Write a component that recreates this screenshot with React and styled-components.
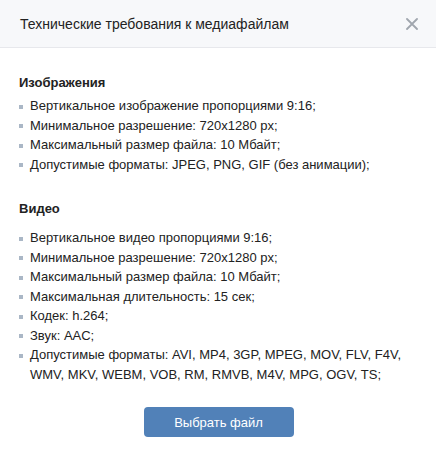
import styled, { createGlobalStyle } from 'styled-components'

const GlobalStyle = createGlobalStyle`
  html, body {
    margin: 0;
    padding: 0;
    background: #ffffff;
  }
  body {
    font-family: "Liberation Sans", Arial, sans-serif;
    color: #222222;
  }
`

const Modal = styled.div`
  width: 436px;
  min-height: 453px;
  background: #ffffff;
  display: flex;
  flex-direction: column;
`

const Header = styled.div`
  height: 48px;
  box-sizing: border-box;
  display: flex;
  align-items: center;
  justify-content: space-between;
  padding: 0 12px 0 20px;
  background: #f7f8fa;
  border-bottom: 1px solid #e7e8ec;
`

const Title = styled.div`
  font-size: 14px;
  color: #222222;
`

const CloseButton = styled.button`
  width: 24px;
  height: 24px;
  padding: 0;
  border: 0;
  background: transparent;
  display: flex;
  align-items: center;
  justify-content: center;
  cursor: pointer;
  color: #a0a6ae;
`

const Body = styled.div`
  padding: 26px 18px 15px 19px;
  display: flex;
  flex-direction: column;
`

const Section = styled.section`
  & + & {
    margin-top: 26px;
  }
`

const SectionTitle = styled.div`
  font-size: 13px;
  font-weight: 700;
  line-height: 18px;
  margin-bottom: ${({ $gap }) => $gap}px;
`

const List = styled.ul`
  list-style: none;
  margin: 0;
  padding: 0;
`

const Item = styled.li`
  position: relative;
  padding-left: 11px;
  font-size: 13px;
  line-height: 19.5px;
  color: #222222;

  &::before {
    content: '';
    position: absolute;
    left: 0;
    top: 8.5px;
    width: 4px;
    height: 4px;
    background: #aab7c6;
  }
`

const Footer = styled.div`
  display: flex;
  justify-content: center;
  margin-top: 23px;
`

const PrimaryButton = styled.button`
  width: 150px;
  height: 30px;
  border: 0;
  border-radius: 4px;
  background: #5181b8;
  color: #ffffff;
  font-family: "Liberation Sans", Arial, sans-serif;
  font-size: 13px;
  cursor: pointer;
`

const images = [
  'Вертикальное изображение пропорциями 9:16;',
  'Минимальное разрешение: 720x1280 px;',
  'Максимальный размер файла: 10 Мбайт;',
  'Допустимые форматы: JPEG, PNG, GIF (без анимации);',
]

const videos = [
  'Вертикальное видео пропорциями 9:16;',
  'Минимальное разрешение: 720x1280 px;',
  'Максимальный размер файла: 10 Мбайт;',
  'Максимальная длительность: 15 сек;',
  'Кодек: h.264;',
  'Звук: AAC;',
  'Допустимые форматы: AVI, MP4, 3GP, MPEG, MOV, FLV, F4V, WMV, MKV, WEBM, VOB, RM, RMVB, M4V, MPG, OGV, TS;',
]

const App = () => (
  <>
    <GlobalStyle />
    <Modal>
      <Header>
        <Title>Технические требования к медиафайлам</Title>
        <CloseButton type="button" aria-label="Закрыть">
          <svg width="12" height="12" viewBox="0 0 12 12">
            <path d="M1 1L11 11M11 1L1 11" stroke="currentColor" strokeWidth="1.8" strokeLinecap="round" />
          </svg>
        </CloseButton>
      </Header>
      <Body>
        <Section>
          <SectionTitle $gap={4}>Изображения</SectionTitle>
          <List>
            {images.map((text) => (
              <Item key={text}>{text}</Item>
            ))}
          </List>
        </Section>
        <Section>
          <SectionTitle $gap={10}>Видео</SectionTitle>
          <List>
            {videos.map((text) => (
              <Item key={text}>{text}</Item>
            ))}
          </List>
        </Section>
        <Footer>
          <PrimaryButton type="button">Выбрать файл</PrimaryButton>
        </Footer>
      </Body>
    </Modal>
  </>
)

export default App
